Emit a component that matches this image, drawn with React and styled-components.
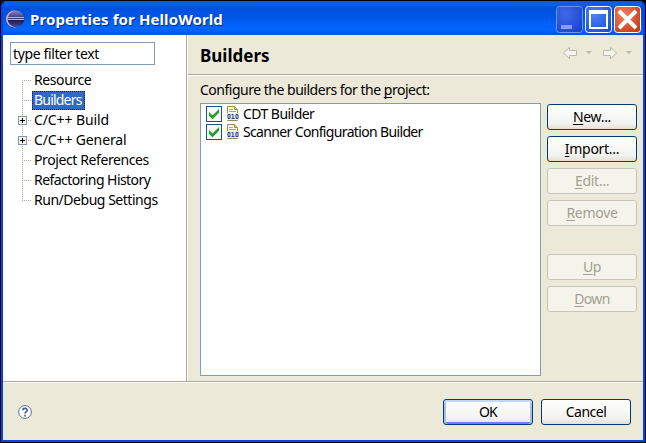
import React from "react";
import styled, { createGlobalStyle } from "styled-components";

const Global = createGlobalStyle`
  * { box-sizing: border-box; }
  body { margin: 0; background: #000; overflow: hidden; }
  u { text-decoration-skip-ink: none; text-decoration-thickness: 1px; text-underline-offset: 2px; }
`;

const Window = styled.div`
  width: 646px;
  height: 443px;
  padding: 1px;
  background: #000;
  display: flex;
  font-family: "Noto Sans", sans-serif;
  font-size: 14px;
  line-height: 20px;
  color: #000;
  white-space: nowrap;
`;

const Frame = styled.div`
  flex: 1;
  display: flex;
  flex-direction: column;
  border: solid #0046ea;
  border-width: 0 2px 2px 2px;
  border-radius: 5px 5px 0 0;
  overflow: hidden;
`;

const TitleBar = styled.header`
  height: 34px;
  display: flex;
  align-items: center;
  padding: 2px 1px 0 3px;
  background: linear-gradient(#0b58e0 0, #0a5ff0 3px, #0150dd 7px, #0054e3 15px, #0062fc 24px, #0065ff 29px, #0050dc 34px);
`;

const Title = styled.h1`
  margin: 0 auto 0 5px;
  font-size: 15px;
  font-weight: 700;
  color: #fff;
  text-shadow: 1px 1px #0a2a80;
`;

const Caption = styled.div`
  display: flex;
  gap: 1px;
`;

const Body = styled.div`
  height: 347px;
  display: flex;
  background: #ece9d8;
  border-bottom: 1px solid #aca899;
`;

const Sidebar = styled.nav`
  width: 184px;
  padding: 7px 7px 0;
  background: #fff;
  border-right: 1px solid #aca899;
`;

const Filter = styled.div`
  width: 145px;
  height: 23px;
  border: 1px solid #7f9db9;
  padding: 1px 2px;
`;

const Tree = styled.div`
  padding: 5px 0 0 8px;
`;

const Row = styled.div`
  height: 20px;
  display: flex;
  align-items: center;
`;

const NodeLabel = styled.span`
  height: 19px;
  line-height: 18px;
  padding: 0 3px 0 2px;
  color: ${(p) => (p.$on ? "#fff" : "#000")};
  background: ${(p) => (p.$on ? "#316ac5" : "none")};
  outline: ${(p) => (p.$on ? "1px dotted #302010" : "none")};
  outline-offset: -1px;
`;

const Fit = styled.span`
  letter-spacing: ${(p) => p.$ls || 0}px;
`;

const Page = styled.main`
  flex: 1;
  border-left: 1px solid #fff;
`;

const PageHead = styled.div`
  height: 40px;
  display: flex;
  align-items: center;
  justify-content: space-between;
  padding: 0 2px 0 12px;
  border-bottom: 1px solid #aca899;
  box-shadow: 0 1px #fff;
`;

const Heading = styled.h2`
  margin: 3px 0 0;
  font-size: 17px;
  font-weight: 700;
`;

const Content = styled.div`
  display: flex;
  padding: 0 0 0 12px;
`;

const ListCol = styled.div`
  width: 341px;
  padding-top: 5px;
`;

const List = styled.div`
  height: 273px;
  margin-top: 3px;
  border: 1px solid #7f9db9;
  background: #fff;
  padding: 1px 5px;
`;

const Item = styled.div`
  height: 18px;
  display: flex;
  align-items: center;
  gap: 3px;
`;

const ItemLabel = styled(Fit)`
  margin-left: -1px;
`;

const Buttons = styled.div`
  padding: 29px 0 0 6px;
  display: flex;
  flex-direction: column;
  gap: 6px;
`;

const Button = styled.button`
  width: 90px;
  height: 26px;
  padding: 0;
  margin-top: ${(p) => p.$gap || 0}px;
  font: inherit;
  line-height: 22px;
  border-radius: 3px;
  border: 1px solid ${(p) => (p.disabled ? "#c9c7ba" : "#003c74")};
  color: ${(p) => (p.disabled ? "#a1a192" : "#000")};
  background: ${(p) => (p.disabled ? "#f5f4ea" : "linear-gradient(#fff, #f3f3ef 75%, #e4e0d8)")};
  box-shadow: ${(p) => (p.$primary ? "inset 0 2px #c2d8fb, inset 2px 0 #a4bff0, inset -2px 0 #a4bff0, inset 0 -2px #6982ee" : "none")};
`;

const Footer = styled.footer`
  flex: 1;
  display: flex;
  align-items: center;
  gap: 8px;
  padding: 1px 12px 0 15px;
  background: #ece9d8;
  border-top: 1px solid #fff;
`;

const Spacer = styled.div`
  flex: 1;
`;

const Nav = styled.div`
  display: flex;
  align-items: center;
  margin-bottom: 3px;
`;

const Eclipse = () => (
  <svg width="19" height="18" viewBox="0 0 19 18">
    <defs>
      <linearGradient id="orb" x1="0" y1="0" x2="0" y2="1">
        <stop offset="0" stopColor="#8a86c4" />
        <stop offset=".45" stopColor="#3a3678" />
        <stop offset=".6" stopColor="#201c58" />
        <stop offset="1" stopColor="#4a4a9c" />
      </linearGradient>
    </defs>
    <circle cx="8.500" cy="9" r="8.500" fill="#d9a6c4" />
    <circle cx="10" cy="9" r="8.300" fill="url(#orb)" />
    <path d="M2 7.500H18M2 9.500H18" stroke="#a9bce0" />
  </svg>
);

const Control = ({ kind }) => (
  <svg width="28" height="28" viewBox="0 0 28 28">
    <defs>
      <radialGradient id={"g" + kind} cx=".35" cy=".3" r=".9">
        <stop offset="0" stopColor={kind === "close" ? "#ee8060" : kind === "min" ? "#3d6ae8" : "#4e82f4"} />
        <stop offset="1" stopColor={kind === "close" ? "#c8330c" : kind === "min" ? "#1740cc" : "#1548d4"} />
      </radialGradient>
    </defs>
    <rect x=".5" y="1.500" width="26" height="26" rx="3" fill={`url(#g${kind})`} stroke={kind === "min" ? "#6f94f0" : "#fff"} />
    {kind === "min" && <rect x="5" y="20" width="11" height="4" fill="#8b9eeb" />}
    {kind === "max" && <path d="M4 5H23V24H4ZM6 9V22H21V9Z" fill="#fff" fillRule="evenodd" />}
    {kind === "close" && <path d="M5 6L22 23M22 6L5 23" stroke="#fff" strokeWidth="4" />}
  </svg>
);

const Branch = ({ expand, first, last }) => (
  <svg width="14" height="20" viewBox="0 0 14 20" shapeRendering="crispEdges">
    <path d={`M4.500 ${first ? 10 : 0}V${last ? 10 : 20}`} stroke="#aca899" strokeDasharray="1 1" />
    <path d="M4 10.500H13" stroke="#aca899" strokeDasharray="1 1" />
    {expand && (
      <>
        <rect x=".5" y="6.500" width="8" height="8" fill="#f5f4ef" stroke="#8096ad" />
        <path d="M2 10.500H7M4.500 8V13" stroke="#000" />
      </>
    )}
  </svg>
);

const Check = () => (
  <svg width="16" height="16" viewBox="0 0 16 16">
    <rect x=".5" y=".5" width="15" height="15" fill="#f6f6f2" stroke="#1c5180" />
    <path d="M3 6V9.800L6.500 13.300L13 6.800V3L6.500 9.500Z" fill="#21a121" />
  </svg>
);

const BinaryFile = () => (
  <svg width="16" height="16" viewBox="0 0 16 16">
    <path d="M2.500 14.500V.5H9.500L12.500 3.500V14.500Z" fill="#fdfbe8" stroke="#9a8a58" />
    <path d="M9.500 .5V3.500H12.500" fill="#e0c878" stroke="#9a8a58" />
    <path d="M4 3.500H8M4 5.500H11" stroke="#8ba4cc" />
    <path d="M2 7H14V14H2Z" fill="#e8eefa" />
    <path d="M3 8.500H5V12.500H3ZM11 8.500H13V12.500H11ZM6.500 8.500H8V12.500M6.500 12.500H9.500" fill="none" stroke="#26437c" />
  </svg>
);

const Arrow = ({ right }) => (
  <svg width="40" height="16" viewBox="0 0 40 16">
    <path
      d={right ? "M2.500 5.500H9.500V2.500L15.500 8L9.500 13.500V10.500H2.500Z" : "M15.500 5.500H8.500V2.500L2.500 8L8.500 13.500V10.500H15.500Z"}
      fill="#f7f6f0"
      stroke="#b9b7ad"
    />
    <path d="M25 6H31L28 9Z" fill="#b9b7ad" />
  </svg>
);

const Help = () => (
  <svg width="14" height="14" viewBox="0 0 14 14">
    <circle cx="7" cy="7" r="6.400" fill="#fff" stroke="#5a6f96" />
    <path d="M4.800 5.300C4.800 2.700 9.300 2.800 9.200 5.200C9.200 6.500 7 6.700 7 8.500M7 9.800V11.500" fill="none" stroke="#455a8c" strokeWidth="1.600" />
  </svg>
);

const nodes = [
  { t: "Resource", ls: -0.4 },
  { t: "Builders", on: true, ls: -0.8 },
  { t: "C/C++ Build", expand: true, ls: -0.1 },
  { t: "C/C++ General", expand: true, ls: -0.13 },
  { t: "Project References", ls: -0.4 },
  { t: "Refactoring History", ls: -0.56 },
  { t: "Run/Debug Settings", ls: -0.47 },
];

const actions = [
  { k: "N", rest: "ew...", ls: -0.3 },
  { k: "I", rest: "mport...", ls: -0.3 },
  { k: "E", rest: "dit...", off: true, ls: -0.3 },
  { k: "R", rest: "emove", off: true, ls: -0.3 },
  { k: "U", rest: "p", off: true, ls: -0.5, gap: 22 },
  { k: "D", rest: "own", off: true, ls: -0.6 },
];

export default function App() {
  return (
    <Window>
      <Global />
      <Frame>
        <TitleBar>
          <Eclipse />
          <Title><Fit $ls={0.1}>Properties for HelloWorld</Fit></Title>
          <Caption><Control kind="min" /><Control kind="max" /><Control kind="close" /></Caption>
        </TitleBar>
        <Body>
          <Sidebar>
            <Filter><Fit $ls={-0.37}>type filter text</Fit></Filter>
            <Tree>
              {nodes.map((n, i) => (
                <Row key={n.t}>
                  <Branch expand={n.expand} first={i === 0} last={i === nodes.length - 1} />
                  <NodeLabel $on={n.on}><Fit $ls={n.ls}>{n.t}</Fit></NodeLabel>
                </Row>
              ))}
            </Tree>
          </Sidebar>
          <Page>
            <PageHead>
              <Heading>Builders</Heading>
              <Nav><Arrow /><Arrow right /></Nav>
            </PageHead>
            <Content>
              <ListCol>
                <Fit $ls={-0.49}>Configure the builders for the <u>p</u>roject:</Fit>
                <List>
                  <Item><Check /><BinaryFile /><ItemLabel $ls={-0.55}>CDT Builder</ItemLabel></Item>
                  <Item><Check /><BinaryFile /><ItemLabel $ls={-0.65}>Scanner Configuration Builder</ItemLabel></Item>
                </List>
              </ListCol>
              <Buttons>
                {actions.map((a) => (
                  <Button key={a.k} disabled={a.off} $gap={a.gap}><Fit $ls={a.ls}><u>{a.k}</u>{a.rest}</Fit></Button>
                ))}
              </Buttons>
            </Content>
          </Page>
        </Body>
        <Footer>
          <Help />
          <Spacer />
          <Button $primary><Fit $ls={-0.7}>OK</Fit></Button>
          <Button><Fit $ls={-0.5}>Cancel</Fit></Button>
        </Footer>
      </Frame>
    </Window>
  );
}
